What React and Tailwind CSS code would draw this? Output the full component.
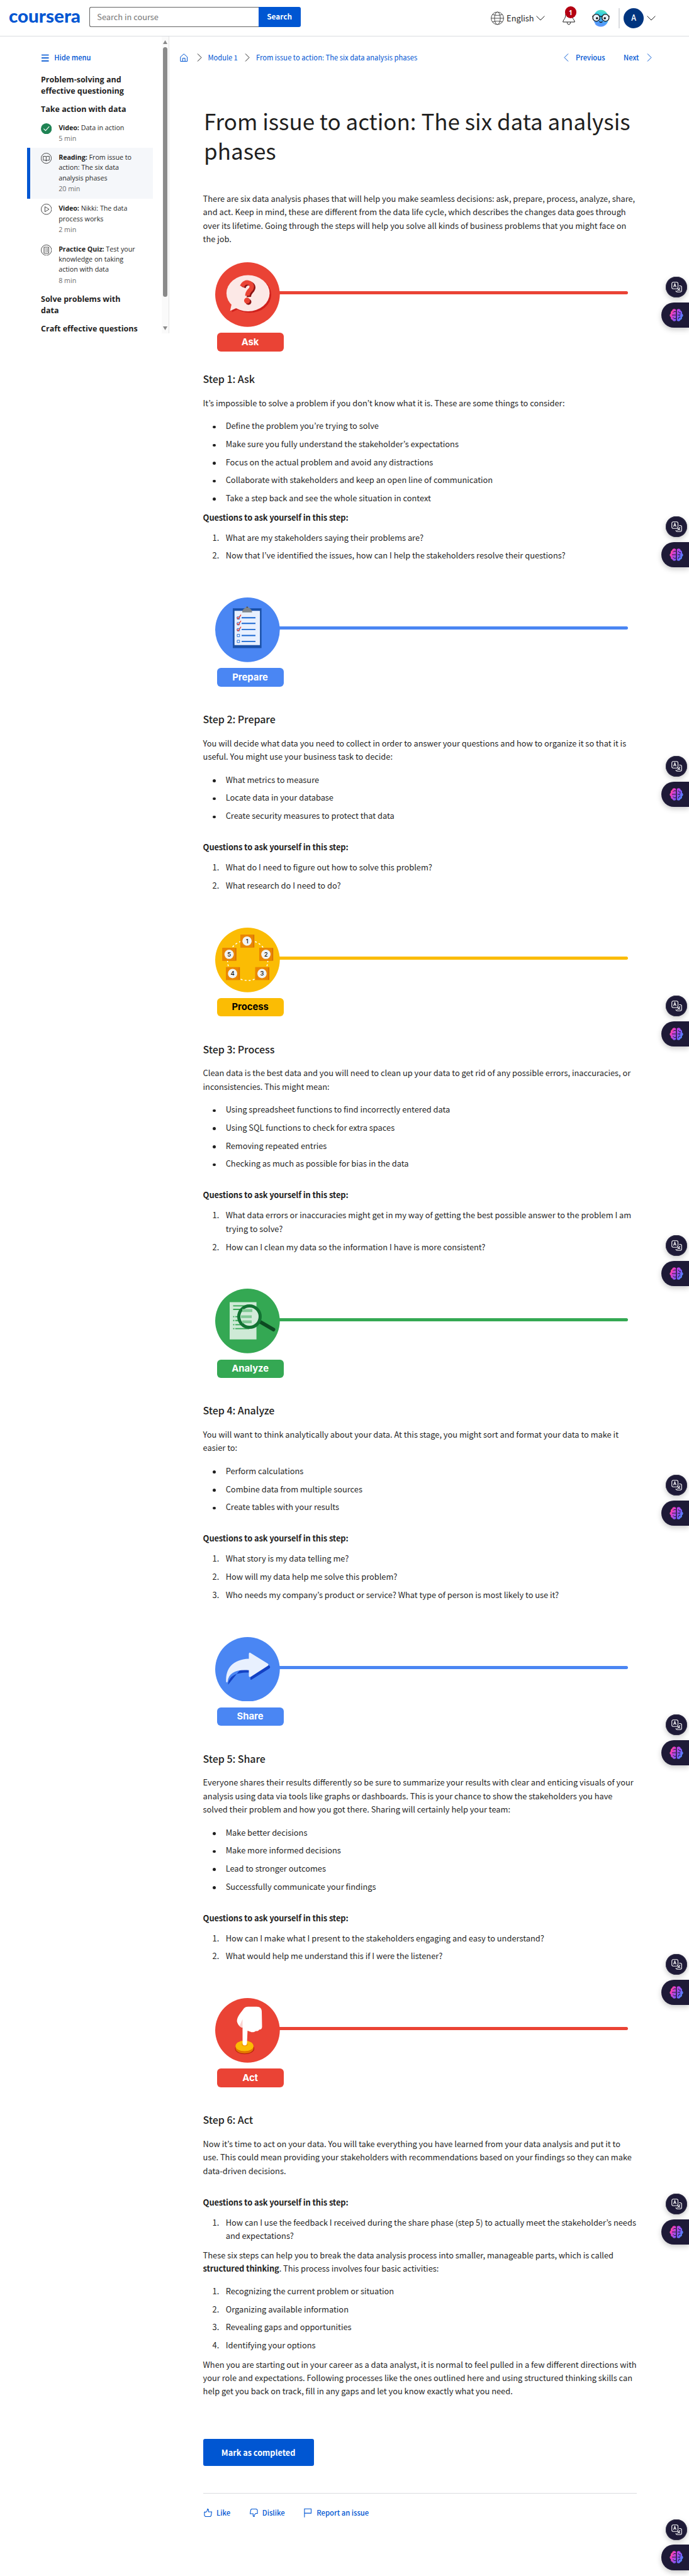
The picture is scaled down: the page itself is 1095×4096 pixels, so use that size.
const SANS = "font-['Noto_Sans_CJK_KR',sans-serif]";
const SIDE = "font-['Open_Sans',sans-serif]";

function Chevron({ dir, className = "" }) {
  const d = {
    right: "M1 0.5 L7 7 L1 13.5",
    left: "M7 0.5 L1 7 L7 13.5",
  }[dir];
  return (
    <svg width="8" height="13" viewBox="0 0 8 14" preserveAspectRatio="none" fill="none" stroke="currentColor" strokeWidth="1" className={"shrink-0 " + className}>
      <path d={d} />
    </svg>
  );
}

function DownChevron() {
  return (
    <svg width="14" height="8" viewBox="0 0 14 8" fill="none" stroke="#1f1f1f" strokeWidth="1" className="shrink-0">
      <path d="M0.6 0.6 L7 7 L13.4 0.6" />
    </svg>
  );
}

function Header() {
  return (
    <header className="flex h-[58.4px] w-full items-start border-b border-[#dadce0]">
      <svg width="116" height="40" viewBox="0 0 116 40" className="mt-[6px] ml-[14px] shrink-0">
        <text x="0" y="30.4" fill="#0056d2" fontFamily="Lato" fontWeight="900" fontSize="28" textLength="114" lengthAdjust="spacingAndGlyphs">coursera</text>
      </svg>
      <div className="mt-[11px] ml-[12.3px] flex h-[32px] w-[335.3px]">
        <div className={"flex flex-1 items-center rounded-l-[3px] border border-r-0 border-[#636363] pl-[11px] text-[12.8px] leading-none text-[#757575] " + SANS}>Search in course</div>
        <div className={"flex w-[67px] items-center justify-center rounded-r-[3px] bg-[#0056d2] pb-[1.5px] text-[11.8px] font-bold leading-none text-white " + SANS}>Search</div>
      </div>
      <div className="ml-[302px] flex h-[58px] items-center">
        <svg width="21" height="22" viewBox="0 0 21 22" fill="none" stroke="#4a4a4a" strokeWidth="1">
          <circle cx="10.5" cy="11" r="9.9" />
          <ellipse cx="10.5" cy="11" rx="4.6" ry="9.9" />
          <path d="M.6 11h19.8M3 5.2c4.5 1.6 10.5 1.6 15 0M3 16.8c4.5-1.6 10.5-1.6 15 0" />
        </svg>
        <span className={"ml-[4.5px] w-[43px] text-[12.8px] leading-none text-[#1f1f1f] " + SANS}>English</span>
        <div className="ml-[4px]"><DownChevron /></div>
        <div className="relative -mt-[2px] ml-[28px]">
          <svg width="20" height="24" viewBox="0 0 20 24" fill="none" stroke="#1f1f1f" strokeWidth="1">
            <path d="M.7 19c0-3 2.8-4.3 3.700-7.800.5-2 .2-5 1.600-7C7 2 8.500 1 10 1s3 1 4 3.200c1.400 2 1.100 5 1.600 7 .9 3.500 3.700 4.800 3.700 7.800zM7.300 19.200c0 5 5.400 5 5.400 0" />
          </svg>
          <span className={"absolute -top-[5.700px] left-[3.500px] flex h-[18.500px] w-[18.500px] items-center justify-center rounded-full bg-[#b30012] text-[10px] font-bold leading-none text-white " + SIDE}>1</span>
        </div>
        <svg width="28" height="28" viewBox="0 0 28 28" className="ml-[26.500px]">
          <defs>
            <linearGradient id="egg" x1=".6" y1="0" x2=".4" y2="1">
              <stop offset="0" stopColor="#5de3c0" />
              <stop offset=".3" stopColor="#2fcbe6" />
              <stop offset=".75" stopColor="#4f9df8" />
              <stop offset="1" stopColor="#5b93fb" />
            </linearGradient>
          </defs>
          <path d="M14 .8c7 0 12 6 12 13.500S20.500 27.500 14 27.500c-4 0-6.500-1.500-8.500-3.300l-.8-2C3 20 2.300 17 2.300 14.300 2.300 6.800 7 .8 14 .8z" fill="url(#egg)" />
          <circle cx="6.700" cy="13.200" r="5.600" fill="#e8f2fd" stroke="#111" strokeWidth="1.300" />
          <circle cx="21.300" cy="13.200" r="5.600" fill="#e8f2fd" stroke="#111" strokeWidth="1.300" />
          <path d="M12 11.800c1-1.200 3-1.200 4 0M.2 10.500l1.500.6M27.800 10.500l-1.500.6M11.500 19.200c1.300 1.800 3.700 1.800 5 0" fill="none" stroke="#111" strokeWidth="1.200" />
          <circle cx="7.800" cy="14" r="1.800" fill="#111" />
          <circle cx="20.200" cy="14" r="1.800" fill="#111" />
        </svg>
        <div className="ml-[14.500px] h-[32px] w-[1.500px] bg-[#dadce0]" />
        <div className={"ml-[6.500px] flex h-[32px] w-[32px] items-center justify-center rounded-full bg-[#00357f] pb-[1px] text-[12.500px] font-medium leading-none text-white " + SANS}>A</div>
        <div className="ml-[4.500px]"><DownChevron /></div>
      </div>
    </header>
  );
}

const itemIcons = {
  done: (
    <svg width="17.400" height="17.400" viewBox="0 0 30 30">
      <circle cx="15" cy="15" r="15" fill="#1f8354" />
      <path d="M7.500 15l5.300 5 10-11" fill="none" stroke="#fff" strokeWidth="1.900" />
    </svg>
  ),
  reading: (
    <svg width="17.400" height="17.400" viewBox="0 0 30 30" fill="none" stroke="#1f1f1f" strokeWidth="1.400">
      <circle cx="14.700" cy="15" r="14" />
      <path d="M6.500 9.500h5.500q2.500 0 2.500 2.500v11M14.500 12q0-2.500 2.500-2.500h6v10.800h-6q-2.500 0-2.500 2.200M14.500 22.500q0-2.200-2.500-2.200H6.500V9.500" />
    </svg>
  ),
  video: (
    <svg width="17.400" height="17.400" viewBox="0 0 30 30" fill="none" stroke="#1f1f1f" strokeWidth="1.400">
      <circle cx="15" cy="15" r="14.200" />
      <path d="M11 8v14l11.500-7z" />
    </svg>
  ),
  quiz: (
    <svg width="17.400" height="17.400" viewBox="0 0 30 30" fill="none" stroke="#1f1f1f" strokeWidth="1.400">
      <circle cx="15" cy="15" r="14.200" />
      <path d="M8.500 7h13v16.500h-13zM11 11.500h2M15 11.500h4M11 15h2M15 15h4M11 18.500h2M15 18.500h4" />
    </svg>
  ),
};

function NavItem({ icon, kind, first, rest = [], time, className }) {
  return (
    <div className={"flex items-start " + className}>
      <div className="mt-[1px] w-[28.200px] shrink-0">{itemIcons[icon]}</div>
      <div className="text-[10.700px] leading-[16.200px] whitespace-nowrap text-[#1f1f1f]">
        <div><b className="tracking-[-0.050px]">{kind}</b> {first}</div>
        {rest.map((r) => <div key={r}>{r}</div>)}
        <div className="pt-[1.500px] text-[#6d6d6d]">{time}</div>
      </div>
    </div>
  );
}

function Sidebar() {
  const head = "pl-[22px] text-[12.500px] font-bold leading-[18px] text-[#1f1f1f] whitespace-nowrap";
  return (
    <aside className={"flex h-[472px] w-[268.500px] shrink-0 border-r border-[#e4e4e4] " + SIDE}>
      <div className="w-[214.300px] pl-[43px]">
        <div className={"mt-[24px] flex items-center pl-[23.300px] text-[11.200px] leading-[18px] font-medium text-[#0056d2] " + SANS}>
          <svg width="12" height="12" viewBox="0 0 12 12" stroke="#0056d2" strokeWidth="1.700" className="mt-[2px]">
            <path d="M0 1.500h11.500M0 6.200h11.500M0 10.900h11.500" />
          </svg>
          <span className="ml-[8px]">Hide menu</span>
        </div>
        <div className={"mt-[17.500px] " + head}>Problem-solving and<br />effective questioning</div>
        <div className={"mt-[10.700px] " + head}>Take action with data</div>
        <NavItem icon="done" kind="Video:" first="Data in action" time="5 min" className="mt-[12.200px] pl-[22px]" />
        <div className="mt-[6.300px] h-[80.800px] w-[200px] border-l-[5px] border-[#0056d2] bg-[#f5f7fa] pt-[7.200px]">
          <NavItem icon="reading" kind="Reading:" first="From issue to" rest={["action: The six data", "analysis phases"]} time="20 min" className="pl-[17px]" />
        </div>
        <NavItem icon="video" kind="Video:" first="Nikki: The data" rest={["process works"]} time="2 min" className="mt-[7.600px] pl-[22px]" />
        <NavItem icon="quiz" kind="Practice Quiz:" first="Test your" rest={["knowledge on taking", "action with data"]} time="8 min" className="mt-[14.500px] pl-[22px]" />
        <div className={"mt-[12.300px] " + head}>Solve problems with<br />data</div>
        <div className={"mt-[11px] " + head}>Craft effective questions</div>
      </div>
      <div className="mt-0 ml-[43px] flex h-full w-[11.200px] flex-col items-center bg-[#fafafa]">
        <svg width="7" height="6" viewBox="0 0 7 6" className="mt-[5.800px] shrink-0"><path d="M3.500 0L7 6H0z" fill="#8a8a8a" /></svg>
        <div className="mt-[5px] h-[397px] w-[6.400px] rounded-full bg-[#8a8a8a]" />
        <svg width="7" height="6" viewBox="0 0 7 6" className="mt-[47px] shrink-0"><path d="M3.500 6L7 0H0z" fill="#8a8a8a" /></svg>
      </div>
    </aside>
  );
}

const art = {
  ask: (
    <>
      <path d="M36.500 70 Q28.500 62 28.700 70.500 L26.200 79.600 L36 75z" fill="#cf201c" />
      <ellipse cx="55" cy="51.600" rx="34" ry="28.700" fill="#cf201c" />
      <ellipse cx="52.200" cy="49.200" rx="34.300" ry="28.700" fill="#fce8e6" />
      <path d="M26.200 66 L23.700 77.200 L34.500 72.500z" fill="#fce8e6" />
      <g fill="none" strokeWidth="7">
        <path d="M45 40c2-5.500 6.500-7 10-6.200 6 1.500 6.500 7 4 10.500-2.500 3.300-5.800 5-5.500 11" stroke="#8b1414" />
        <path d="M42.700 38.500c2-5.500 6.500-7 10-6.200 6 1.500 6.500 7 4 10.500-2.500 3.300-5.800 5-5.500 10.500" stroke="#ea4335" />
      </g>
      <circle cx="52.800" cy="63" r="4.700" fill="#8b1414" />
      <circle cx="50.600" cy="61" r="4.700" fill="#ea4335" />
    </>
  ),
  prepare: (
    <>
      <path d="M28 17.300h45.600v63.100H28z" fill="#1a50a8" />
      <path d="M30.700 21.300h40.400v54.500H30.700z" fill="#e8f0fe" />
      <path d="M43 23.700c0-5 3-5.500 5-7.500a3.500 3.500 0 0 1 5.600 0c2 2 5 2.500 5 7.500z" fill="#80868b" />
      <circle cx="50.800" cy="15.400" r=".9" fill="#333" />
      <path d="M42 32.200h22M42 41.300h22M42 50.900h22M42 60.500h22M42 69.900h22" stroke="#1967d2" strokeWidth="1.900" />
      <path d="M35 30.700h3.800v3.800H35zM35 39.800h3.800v3.800H35zM35 49.400h3.800v3.800H35zM35 58.600h3.800v3.800H35zM35 68h3.800v3.800H35z" fill="none" stroke="#1967d2" strokeWidth=".9" />
      <path d="M34.500 31.500l2 2.500 4.500-6.500M34.500 41.100l2 2.500 4.500-6.500M34.500 50.700l2 2.500 4.500-6.500" fill="none" stroke="#ea4335" strokeWidth="1.400" />
    </>
  ),
  process: (
    <>
      <circle cx="51.600" cy="52" r="32" fill="none" stroke="#fff" strokeWidth="1.500" strokeDasharray="3 3.500" />
      {[[40, 11.200], [70, 32.300], [63.800, 62.900], [17, 62.900], [11.500, 32.300]].map(([x, y], i) => (
        <g key={i}>
          <rect x={x} y={y} width="22.200" height="20.300" fill="#d56e0c" />
          <rect x={x} y={y} width="20.700" height="20.300" fill="#ea8600" />
          <circle cx={x + 10.600} cy={y + 10.100} r="7.400" fill="#f1f3f4" />
          <text x={x + 10.600} y={y + 13.600} fontSize="9.500" fontFamily="Inter" fontWeight="500" textAnchor="middle" fill="#111">{i + 1}</text>
        </g>
      ))}
    </>
  ),
  analyze: (
    <>
      <path d="M23 21.600h42.600v59.200H23z" fill="#ceead6" />
      <path d="M28.500 27.400h21M28.500 33h16M28.500 44.600h2M32 44.600h8M28.500 50.800h2M32 50.800h8M28.500 57.400h2M32 57.400h12M28.500 63.600h2M32 63.600h22" stroke="#34a853" strokeWidth="1.900" />
      <path d="M71 52.500L92.500 65" stroke="#0d4a22" strokeWidth="6" strokeLinecap="round" />
      <circle cx="54.500" cy="44.600" r="17" fill="#d3ebda" stroke="#137333" strokeWidth="5" />
      <path d="M43 32.600h16v4.600H43zM41 42.400h17v4.400H41zM43 50.600h15v4.400H43z" fill="#81c995" />
    </>
  ),
  share: (
    <>
      <path d="M20.500 75.700c1-14 13-20 35.500-19v10.600q.5 1.500 2.500 0l28-17.500q1.500-2 0-4L58 29z" fill="#1341c4" />
      <path d="M17.500 71.500c-1.500-22 10.500-36 36-37.100v-8q.5-2.500 3-1L84 42.500q1.500 1.500 0 3L56.500 63.300q-2.500.8-3-1V52.700c-20-1.500-32 3.500-34 18.800q-1 1-2 0z" fill="#e8f0fe" />
    </>
  ),
  act: (
    <>
      <ellipse cx="46.800" cy="80.500" rx="15.200" ry="8.800" fill="#b31412" />
      <path d="M32.400 76.200v4c0 4.500 6.400 8 14.300 8s14.200-3.500 14.200-8v-4z" fill="#e37400" />
      <ellipse cx="46.600" cy="76.200" rx="14.200" ry="8.400" fill="#fbbc04" />
      <ellipse cx="46.900" cy="73.600" rx="5" ry="3" fill="#f29900" />
      <path d="M46 16q2.500-2.300 6-2.300h14c5.500 0 8 3 8 8l.5 24c0 3-2 4.500-4.500 4.500-1 2-3 2.600-5.500 2.300-2.500 2-6.500 2.500-8.500 1-2-.2-3-1.200-4.600-1.500L50.500 72c0 4.500-7 4.500-7 0V47c-4-.5-8-5-8.900-10 0-8 6-13 11.400-21z" fill="#fff" />
      <path d="M43.500 33.500l-5 11q2 2.300 5 2.600z" fill="#fad2cf" />
    </>
  ),
};

function Banner({ kind, label, circle, bar, box, first }) {
  return (
    <div className={first ? "h-[173.100px]" : "h-[180.900px]"}>
      <div className="flex items-start pl-[19.500px]">
        <svg width="102.700" height="102.700" viewBox="0 0 102.700 102.700" className="relative shrink-0">
          <circle cx="51.350" cy="51.350" r="51.350" className={circle} />
          {art[kind]}
        </svg>
        <div className={"mt-[46.200px] -ml-[2px] h-[5px] w-[555.500px] rounded-r-full " + bar} />
      </div>
      <div className={"mt-[9.400px] ml-[22px] flex h-[29.300px] w-[106px] items-center justify-center rounded-[6px] text-[14.800px] leading-none font-bold font-['Inter',sans-serif] " + box}>{label}</div>
    </div>
  );
}

const red = { circle: "fill-[#ea4335]", bar: "bg-[#ea4335]", box: "bg-[#ea4335] text-white" };
const blue = { circle: "fill-[#4a86f3]", bar: "bg-[#4a86f3]", box: "bg-[#4a86f3] text-white" };
const yellow = { circle: "fill-[#fbbc04]", bar: "bg-[#fbbc04]", box: "bg-[#fbbc04] text-black" };
const green = { circle: "fill-[#34a853]", bar: "bg-[#34a853]", box: "bg-[#34a853] text-white" };

function Lines({ lines }) {
  return lines.map((l, i) => <div key={i}>{l}</div>);
}

function Heading({ children }) {
  return <h2 className="h-[24px] text-[16px] leading-[24px] font-medium tracking-[-0.050px]">{children}</h2>;
}

function Bullets({ items, className }) {
  return (
    <ul className={"flex flex-col gap-[7.200px] " + className}>
      {items.map((t) => (
        <li key={t} className="flex pl-[15.700px]">
          <span className="mt-[10.500px] mr-[15.900px] h-[4.500px] w-[4.500px] rounded-full bg-[#1f1f1f]" />
          <span>{t}</span>
        </li>
      ))}
    </ul>
  );
}

function Numbers({ items, className = "mt-[10.700px]" }) {
  return (
    <ol className={"flex flex-col gap-[7.200px] " + className}>
      {items.map((t, i) => (
        <li key={i} className="flex pl-[15px]">
          <span className="w-[21.100px] shrink-0">{i + 1}.</span>
          <div><Lines lines={t} /></div>
        </li>
      ))}
    </ol>
  );
}

function Questions({ tight }) {
  return <div className={(tight ? "mt-[9.100px]" : "mt-[28.600px]") + " font-bold tracking-[-0.090px]"}>Questions to ask yourself in this step:</div>;
}

const steps = [
  {
    kind: "ask", label: "Ask", tone: red, title: "Step 1: Ask", tight: true,
    p: ["It’s impossible to solve a problem if you don’t know what it is. These are some things to consider:"],
    ul: ["Define the problem you’re trying to solve", "Make sure you fully understand the stakeholder’s expectations", "Focus on the actual problem and avoid any distractions", "Collaborate with stakeholders and keep an open line of communication", "Take a step back and see the whole situation in context"],
    ol: [["What are my stakeholders saying their problems are?"], ["Now that I’ve identified the issues, how can I help the stakeholders resolve their questions?"]],
  },
  {
    kind: "prepare", label: "Prepare", tone: blue, title: "Step 2: Prepare",
    p: ["You will decide what data you need to collect in order to answer your questions and how to organize it so that it is", "useful. You might use your business task to decide:"],
    ul: ["What metrics to measure", "Locate data in your database", "Create security measures to protect that data"],
    ol: [["What do I need to figure out how to solve this problem?"], ["What research do I need to do?"]],
  },
  {
    kind: "process", label: "Process", tone: yellow, title: "Step 3: Process",
    p: ["Clean data is the best data and you will need to clean up your data to get rid of any possible errors, inaccuracies, or", "inconsistencies. This might mean:"],
    ul: ["Using spreadsheet functions to find incorrectly entered data", "Using SQL functions to check for extra spaces", "Removing repeated entries", "Checking as much as possible for bias in the data"],
    ol: [["What data errors or inaccuracies might get in my way of getting the best possible answer to the problem I am", "trying to solve?"], ["How can I clean my data so the information I have is more consistent?"]],
  },
  {
    kind: "analyze", label: "Analyze", tone: green, title: "Step 4: Analyze",
    p: ["You will want to think analytically about your data. At this stage, you might sort and format your data to make it", "easier to:"],
    ul: ["Perform calculations", "Combine data from multiple sources", "Create tables with your results"],
    ol: [["What story is my data telling me?"], ["How will my data help me solve this problem?"], ["Who needs my company’s product or service? What type of person is most likely to use it?"]],
  },
  {
    kind: "share", label: "Share", tone: blue, title: "Step 5: Share",
    p: ["Everyone shares their results differently so be sure to summarize your results with clear and enticing visuals of your", "analysis using data via tools like graphs or dashboards. This is your chance to show the stakeholders you have", "solved their problem and how you got there. Sharing will certainly help your team:"],
    ul: ["Make better decisions", "Make more informed decisions", "Lead to stronger outcomes", "Successfully communicate your findings"],
    ol: [["How can I make what I present to the stakeholders engaging and easy to understand?"], ["What would help me understand this if I were the listener?"]],
  },
  {
    kind: "act", label: "Act", tone: red, title: "Step 6: Act",
    p: ["Now it’s time to act on your data. You will take everything you have learned from your data analysis and put it to", "use. This could mean providing your stakeholders with recommendations based on your findings so they can make", "data-driven decisions."],
    ol: [["How can I use the feedback I received during the share phase (step 5) to actually meet the stakeholder’s needs", "and expectations?"]],
  },
];

function Step({ s, index }) {
  return (
    <section className={index === 0 ? "mt-[26.500px]" : "mt-[56.500px]"}>
      <Banner kind={s.kind} label={s.label} first={index === 0} {...s.tone} />
      <Heading>{s.title}</Heading>
      <div className="mt-[15.700px]"><Lines lines={s.p} /></div>
      {s.ul && <Bullets items={s.ul} className="mt-[15px]" />}
      <Questions tight={s.tight} />
      <Numbers items={s.ol} />
    </section>
  );
}

function Feedback() {
  const icon = { width: 15, height: 15, viewBox: "0 0 24 24", fill: "none", stroke: "#0056d2", strokeWidth: 1.700, className: "shrink-0" };
  return (
    <div className="mt-[21px] flex h-[18px] items-center text-[11.300px] leading-[18px] font-medium text-[#0056d2]">
      <svg {...icon}><path d="M3 10.500V19l2.500 2.500H18l2-2 1.500-10H13.500V4L12 2.500h-1.500V6L7 10.500H3zM3 10.500l2-1.500" /></svg>
      <span className="ml-[6.300px] w-[52.500px]">Like</span>
      <svg {...icon}><path d="M21 13.500V5l-2.500-2.500H6l-2 2-1.500 10H10V20l1.500 1.500H13V18l3.500-4.500H21z" /></svg>
      <span className="ml-[5.400px] w-[65.500px]">Dislike</span>
      <svg {...icon}><path d="M3 23.500V2h17v11H3" /></svg>
      <span className="ml-[6px]">Report an issue</span>
    </div>
  );
}

function Main() {
  return (
    <main className="min-w-0 flex-1">
      <nav className="mt-[24px] flex h-[18px] items-center pl-[17.500px] text-[11.200px] leading-[18px] text-[#0056d2]">
        <svg width="12.500" height="13" viewBox="0 0 12.500 13" fill="none" stroke="#0056d2" strokeWidth="1" className="mt-[1px]">
          <path d="M.8 5.500L6.200.8l5.400 4.700v7H.8zM4.300 12.400V7.500h3.800v4.900" />
        </svg>
        <Chevron dir="right" className="mt-[1px] ml-[14px] text-[#1f1f1f]" />
        <span className="ml-[10px] w-[47.500px] tracking-[-0.050px]">Module 1</span>
        <Chevron dir="right" className="mt-[1px] ml-[11px] text-[#1f1f1f]" />
        <span className="ml-[10px] w-[257px] whitespace-nowrap">From issue to action: The six data analysis phases</span>
        <div className="ml-[231.500px] flex items-center font-medium">
          <Chevron dir="left" />
          <span className="ml-[11.500px] w-[48px]">Previous</span>
          <span className="ml-[28px] w-[25px]">Next</span>
          <Chevron dir="right" className="ml-[11.500px]" />
        </div>
      </nav>
      <article className="ml-[54.100px] w-[689.600px] pt-[67.200px] text-[12.840px] leading-[21.450px] whitespace-nowrap">
        <h1 className="pl-[1.500px] text-[34.950px] leading-[47.200px]">From issue to action: The six data analysis<br />phases</h1>
        <div className="mt-[42.900px]">
          <Lines lines={["There are six data analysis phases that will help you make seamless decisions: ask, prepare, process, analyze, share,", "and act. Keep in mind, these are different from the data life cycle, which describes the changes data goes through", "over its lifetime. Going through the steps will help you solve all kinds of business problems that you might face on", "the job."]} />
        </div>
        {steps.map((s, i) => <Step key={s.kind} s={s} index={i} />)}
        <div className="mt-[9.100px]">
          These six steps can help you to break the data analysis process into smaller, manageable parts, which is called<br />
          <b className="tracking-[-0.090px]">structured thinking</b>. This process involves four basic activities:
        </div>
        <Numbers className="mt-[14.200px]" items={[["Recognizing the current problem or situation"], ["Organizing available information"], ["Revealing gaps and opportunities"], ["Identifying your options"]]} />
        <div className="mt-[9.100px]">
          <Lines lines={["When you are starting out in your career as a data analyst, it is normal to feel pulled in a few different directions with", "your role and expectations. Following processes like the ones outlined here and using structured thinking skills can", "help get you back on track, fill in any gaps and let you know exactly what you need."]} />
        </div>
        <div className="mt-[65.500px] flex h-[42.900px] w-[176px] items-center justify-center rounded-[3px] bg-[#0056d2] pb-[1px] text-[12.700px] font-bold text-white">Mark as completed</div>
        <div className="mt-[43px] border-t border-[#dadce0]" />
        <Feedback />
      </article>
    </main>
  );
}

function FloatingTools({ top, id }) {
  return (
    <div className="absolute right-0 flex w-[43.600px] flex-col" style={{ top }}>
      <div className="ml-[7px] flex h-[33.200px] w-[33.200px] items-center justify-center rounded-full bg-[#1e1a37] shadow-[0_3px_9px_rgba(0,0,0,0.22)] ring-1 ring-inset ring-[#35334a]">
        <svg width="17" height="17" viewBox="0 0 34 34" fill="none" stroke="#fff" strokeWidth="2.200">
          <path d="M16.500 1.500H6A4.500 4.500 0 0 0 1.500 6v12A4.500 4.500 0 0 0 6 22.500h10.500a4.500 4.500 0 0 0 4.500-4.500V6a4.500 4.500 0 0 0-4.500-4.500zM7 17l4-11 4 11M8.500 13.500h5" />
          <path d="M24.500 13H28a4.500 4.500 0 0 1 4.500 4.500V28a4.500 4.500 0 0 1-4.500 4.500H19a4.500 4.500 0 0 1-4.500-4.500M19 29c4-2 7-6 8-11M20 22.500l8 5.500" />
        </svg>
      </div>
      <div className="mt-[7.500px] flex h-[40.200px] items-center rounded-l-[20px] bg-[#1e1a37] pl-[13px] shadow-[0_3px_9px_rgba(0,0,0,0.22)]">
        <svg width="22" height="20" viewBox="0 0 44 40">
          <defs>
            <linearGradient id={"l" + id} x1="0" y1="0" x2="1" y2="1">
              <stop offset="0" stopColor="#ff9d3c" />
              <stop offset=".35" stopColor="#f23ac0" />
              <stop offset="1" stopColor="#6a5cff" />
            </linearGradient>
            <linearGradient id={"r" + id} x1="0" y1="0" x2="1" y2="1">
              <stop offset="0" stopColor="#d33ce0" />
              <stop offset=".5" stopColor="#7a5cff" />
              <stop offset="1" stopColor="#33b4ff" />
            </linearGradient>
          </defs>
          <path d="M20.500 2.500C15-1 9 1 8.500 6 4 8 3 12 4.500 15-.5 18-.5 24 4.500 26.500 3 31 6 34.500 9 35c2 5 8.500 6 11.500 2.500z" fill={"url(#l" + id + ")"} />
          <path d="M23.500 2.500C29-1 35 1 35.500 6c4.500 2 5.500 6 4 9 5 3 5 9 0 11.500C41 31 38 34.500 35 35c-2 5-8.500 6-11.500 2.500z" fill={"url(#r" + id + ")"} />
          <path d="M20 9h-6l-3 3M20 20H8M20 31h-5l-4-3.500M28 8l3 5h5M26 20h5l4-4M31 20l3 4M28 33l2-6 5 1" fill="none" stroke="#1e1a37" strokeWidth="2" />
        </svg>
      </div>
    </div>
  );
}

const toolTops = [440.200, 821.200, 1202.100, 1583.100, 1964.100, 2345.100, 2726.100, 3107, 3487.900, 4005.700];

export default function App() {
  return (
    <div className={"relative h-[4096px] w-[1095px] overflow-hidden bg-white text-[#1f1f1f] " + SANS}>
      <Header />
      <div className="flex items-start">
        <Sidebar />
        <Main />
      </div>
      {toolTops.map((t, i) => <FloatingTools key={t} id={i} top={t} />)}
    </div>
  );
}
